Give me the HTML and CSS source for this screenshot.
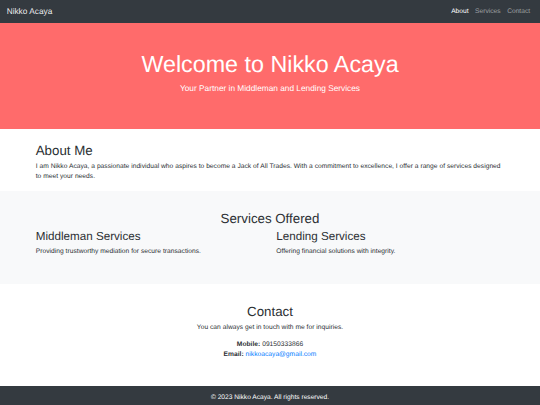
FILE: index.html
```html
<!DOCTYPE html>
<html lang="en">
<head>
<meta charset="utf-8">
<title>Nikko Acaya</title>
<link rel="stylesheet" href="styles.css">
</head>
<body>
<nav class="navbar">
  <a class="brand" href="#">Nikko Acaya</a>
  <ul class="nav">
    <li><a class="nav-link active" href="#about">About</a></li>
    <li><a class="nav-link" href="#services">Services</a></li>
    <li><a class="nav-link" href="#contact">Contact</a></li>
  </ul>
</nav>
<header class="hero">
  <h1 class="hero-title">Welcome to Nikko Acaya</h1>
  <p class="lead">Your Partner in Middleman and Lending Services</p>
</header>
<section id="about" class="container about">
  <h2 class="h2">About Me</h2>
  <p class="text">I am Nikko Acaya, a passionate individual who aspires to become a Jack of All Trades. With a commitment to excellence, I offer a range of services designed to meet your needs.</p>
</section>
<section id="services" class="services">
  <div class="container">
    <h2 class="h2 center">Services Offered</h2>
    <div class="row">
      <div class="col">
        <h3 class="h3">Middleman Services</h3>
        <p class="text">Providing trustworthy mediation for secure transactions.</p>
      </div>
      <div class="col">
        <h3 class="h3">Lending Services</h3>
        <p class="text">Offering financial solutions with integrity.</p>
      </div>
    </div>
  </div>
</section>
<section id="contact" class="container contact center">
  <h2 class="h2">Contact</h2>
  <p class="text">You can always get in touch with me for inquiries.</p>
  <p class="text"><strong>Mobile:</strong> 09150333866<br><strong>Email:</strong> <a class="link" href="#">nikkoacaya@gmail.com</a></p>
</section>
<footer class="footer">
  <p class="footer-text">&copy; 2023 Nikko Acaya. All rights reserved.</p>
</footer>
</body>
</html>
```
FILE: styles.css
```css
* { box-sizing: border-box; }
html, body { margin: 0; padding: 0; }
body {
  font-family: "Liberation Sans", Arial, sans-serif;
  font-size: 6.65px;
  line-height: 1.5;
  color: #2b2f33;
  background: #fff;
  text-rendering: geometricPrecision;
}
.navbar {
  background: #343a40;
  display: flex;
  align-items: center;
  justify-content: space-between;
  padding: 3.3px 6.65px;
}
.brand {
  color: rgba(255,255,255,.92);
  text-decoration: none;
  font-size: 8.3px;
  line-height: 1.5;
  padding: 2.1px 0;
}
.nav {
  list-style: none;
  margin: 0;
  padding: 0;
  display: flex;
}
.nav-link {
  display: block;
  padding: 3.3px 3.3px;
  color: rgba(255,255,255,.5);
  text-decoration: none;
}
.nav-link.active { color: #fff; }
.hero {
  background: #ff6b6b;
  color: #fff;
  text-align: center;
  padding: 28px 13.3px 27.9px;
  margin-bottom: 13.3px;
}
.hero-title {
  font-size: 23.3px;
  font-weight: 300;
  line-height: 1.2;
  margin: 0 0 3.3px;
}
.lead {
  font-size: 8.3px;
  font-weight: 300;
  margin: 0 0 6.65px;
}
.container {
  width: 468.5px;
  margin: 0 auto;
}
.about { padding-bottom: 2px; }
.h2 {
  font-size: 13.3px;
  font-weight: 500;
  line-height: 1.2;
  margin: 0 0 3.3px;
}
.h3 {
  font-size: 11.65px;
  font-weight: 500;
  line-height: 1.2;
  margin: 0 0 3.3px;
}
.text {
  margin: 0 0 6.65px;
  letter-spacing: 0.03px;
}
.center { text-align: center; }
.services {
  background: #f8f9fa;
  padding: 20px 0;
}
.row {
  display: grid;
  grid-template-columns: 1fr 1fr;
  column-gap: 12.5px;
}
.contact { padding: 20px 0; }
.link { color: #007bff; text-decoration: none; }
strong { font-weight: bold; }
.footer {
  background: #343a40;
  color: #fff;
  text-align: center;
  padding: 6.65px 0;
}
.footer-text { margin: 0; }
```
